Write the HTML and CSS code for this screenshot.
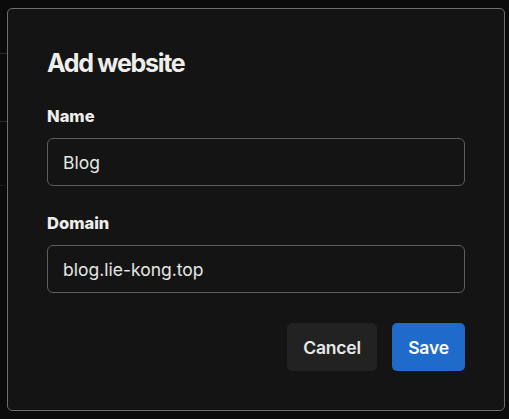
FILE: index.html
```html
<!DOCTYPE html>
<html lang="en">
<head>
<meta charset="utf-8">
<title>Add website</title>
<link rel="stylesheet" href="styles.css">
</head>
<body>
<div class="backdrop">
  <div class="bg-row"></div>
  <div class="bg-row tall"></div>
  <div class="bg-row mid"></div>
</div>
<div class="dialog" role="dialog" aria-labelledby="dlg-title">
  <h2 class="dialog-title" id="dlg-title">Add website</h2>
  <div class="field">
    <label class="field-label" for="name">Name</label>
    <div class="field-input" id="name">Blog</div>
  </div>
  <div class="field field-second">
    <label class="field-label" for="domain">Domain</label>
    <div class="field-input" id="domain">blog.lie-kong.top</div>
  </div>
  <div class="actions">
    <button class="btn btn-cancel" type="button">Cancel</button>
    <button class="btn btn-save" type="button">Save</button>
  </div>
</div>
</body>
</html>
```
FILE: styles.css
```css
* { box-sizing: border-box; }
html, body {
  margin: 0;
  padding: 0;
  background: #0b0b0b;
  width: 509px;
  height: 419px;
  overflow: hidden;
  font-family: Inter, "Noto Sans", "Liberation Sans", sans-serif;
  color: #ededeb;
}
.backdrop {
  display: flex;
  flex-direction: column;
  width: 8px;
  padding-top: 53px;
}
.bg-row {
  height: 1px;
  background: #2c2c2c;
}
.bg-row.tall { margin-top: 67px; }
.bg-row.mid { margin-top: 63px; width: 5px; background: #1f1f1f; }
.dialog {
  position: absolute;
  left: 7px;
  top: 8px;
  width: 498px;
  background: #141414;
  border: 1px solid #6e6e6e;
  border-radius: 5px;
  padding: 39px;
  display: flex;
  flex-direction: column;
}
.dialog-title {
  margin: 0 0 26px;
  font-size: 25px;
  line-height: 30px;
  font-weight: 700;
  letter-spacing: -1.3px;
  color: #eeeeea;
}
.field {
  display: flex;
  flex-direction: column;
  gap: 10px;
}
.field-second { margin-top: 25px; }
.field-label {
  font-size: 16.5px;
  line-height: 24px;
  font-weight: 800;
  letter-spacing: 0;
  color: #eeeeea;
}
.field-input {
  height: 48px;
  border: 1px solid #5e5e5e;
  border-radius: 6px;
  padding: 0 15px;
  display: flex;
  align-items: center;
  font-size: 17.5px;
  color: #e6e6e4;
  background: #141414;
}
.actions {
  margin-top: 30px;
  display: flex;
  justify-content: flex-end;
  gap: 15px;
}
.btn {
  height: 48px;
  border: none;
  border-radius: 5px;
  padding: 0 16px;
  font-family: inherit;
  font-size: 17.5px;
  font-weight: 600;
  letter-spacing: -0.2px;
}
.btn-cancel {
  width: 90px;
  background: #222222;
  color: #e8e8e6;
}
.btn-save {
  width: 73px;
  background: #1e6bcb;
  color: #ffffff;
}
```
